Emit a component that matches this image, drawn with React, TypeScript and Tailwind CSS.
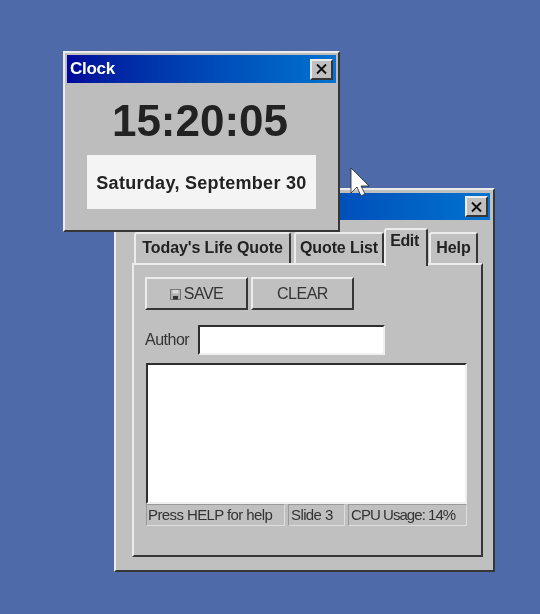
import React from 'react';

const raised = 'border-2 border-t-[#ececec] border-l-[#ececec] border-r-[#363636] border-b-[#363636]';
const sunken = 'border-2 border-t-[#2e2e2e] border-l-[#2e2e2e] border-r-[#f0f0f0] border-b-[#f0f0f0]';
const titleBar = 'bg-gradient-to-r from-[#00069a] to-[#0a73cf]';

const CloseButton: React.FC = () => (
  <div className={`${raised} w-[23px] h-[21px] bg-[#c0c0c0] flex items-center justify-center`}>
    <svg width="13" height="12" viewBox="0 0 13 12" stroke="#111" strokeWidth="1.9" fill="none">
      <path d="M2 1.5l9 9M11 1.5l-9 9" />
    </svg>
  </div>
);

const Tab: React.FC<{ label: string; active?: boolean; width: string }> = ({ label, active, width }) => (
  <div
    className={
      active
        ? `${width} h-[38px] -mb-[3px] z-10 relative bg-[#c0c0c0] border-2 border-b-0 border-t-[#ececec] border-l-[#ececec] border-r-[#363636] rounded-t-[3px] text-center pt-[1px] pr-[3px] leading-[20px] tracking-[-0.4px]`
        : `${width} h-[31px] bg-[#c0c0c0] border-2 border-b-0 border-t-[#ececec] border-l-[#ececec] border-r-[#363636] rounded-t-[3px] text-center pt-[3px] leading-[22px] tracking-[-0.1px]`
    }
  >
    {label}
  </div>
);

const SaveIcon: React.FC = () => (
  <svg width="11" height="11" viewBox="0 0 11 11" className="mr-[3px] mt-[2px]">
    <rect x="0.5" y="0.5" width="10" height="10" fill="#b0b0b0" stroke="#777" />
    <rect x="2.5" y="1" width="6" height="3.5" fill="#d8d8d8" />
    <rect x="3" y="7" width="5" height="3.5" fill="#333" />
  </svg>
);

const App: React.FC = () => {
  return (
    <div className="relative w-[540px] h-[614px] overflow-hidden bg-[#4f6aa8] blur-[0.4px] font-['Liberation_Sans',Arial,sans-serif] text-[#222]">
      {/* Main window */}
      <div className={`absolute left-[114px] top-[188px] w-[381px] h-[384px] bg-[#c0c0c0] ${raised} px-[3px] pt-[3px]`}>
        <div className={`${titleBar} h-[27px] flex items-center justify-end pr-[2px]`}>
          <CloseButton />
        </div>
        <div className="ml-[13px] mr-[7px] mt-[8px]">
          <div className="flex items-end pl-[2px] h-[35px] text-[16px] font-bold">
            <Tab label="Today's Life Quote" width="w-[157px]" />
            <div className="w-[3px]" />
            <Tab label="Quote List" width="w-[90px]" />
            <Tab label="Edit" active width="w-[44px]" />
            <div className="w-[1px]" />
            <Tab label="Help" width="w-[49px]" />
          </div>
          <div className={`${raised} h-[294px] pt-[12px] pl-[11px] pr-[14px]`}>
            <div className="flex gap-[3px] text-[16px] text-[#333] tracking-[-0.5px]">
              <div className={`${raised} w-[103px] h-[33px] flex items-center justify-center`}>
                <SaveIcon />
                SAVE
              </div>
              <div className={`${raised} w-[103px] h-[33px] flex items-center justify-center`}>CLEAR</div>
            </div>
            <div className="flex items-center mt-[15px] h-[30px]">
              <span className="w-[53px] text-[16px] text-[#333] tracking-[-0.5px]">Author</span>
              <div className={`${sunken} w-[187px] h-[30px] bg-white`} />
            </div>
            <div className={`${sunken} mt-[8px] ml-[1px] h-[141px] bg-white`} />
            <div className="flex ml-[1px] gap-[3px] h-[22px] text-[15px] tracking-[-0.6px] leading-[20px] text-[#333]">
              <div className="w-[139px] border border-[#999] border-r-[#ddd] border-b-[#ddd] pl-[1px]">Press HELP for help</div>
              <div className="w-[57px] border border-[#999] border-r-[#ddd] border-b-[#ddd] pl-[2px]">Slide 3</div>
              <div className="w-[119px] border border-[#999] border-r-[#ddd] border-b-[#ddd] pl-[2px] tracking-[-0.95px]">CPU Usage: 14%</div>
            </div>
          </div>
        </div>
      </div>

      {/* Clock window */}
      <div className={`absolute left-[63px] top-[51px] w-[277px] h-[181px] bg-[#bdbdbd] ${raised} px-[2px] pt-[2px] z-20`}>
        <div className={`${titleBar} h-[28px] flex items-center justify-between pl-[3px] pr-[3px]`}>
          <span className="text-white font-bold text-[17px] tracking-[-0.3px]">Clock</span>
          <CloseButton />
        </div>
        <div className="text-center text-[44px] leading-[46px] font-bold text-[#222] mt-[15px] -ml-[3px]">15:20:05</div>
        <div className="ml-[20px] mt-[11px] w-[229px] h-[54px] pt-[3px] bg-[#f4f4f4] flex items-center justify-center text-[18px] font-bold text-[#222] tracking-[0.3px]">
          Saturday, September 30
        </div>
      </div>

      {/* Mouse pointer */}
      <svg className="absolute left-[350px] top-[167px] z-30" width="20" height="32" viewBox="0 0 20 32">
        <path d="M1 1v25l6-6 4 9 4-2-4-8h8z" fill="#fff" stroke="#222" strokeWidth="0.8" />
      </svg>
    </div>
  );
};

export default App;
